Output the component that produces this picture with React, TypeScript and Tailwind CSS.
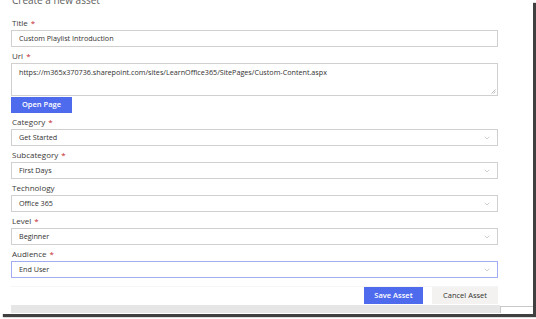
import { ChevronDown } from 'lucide-react';

const font = { fontFamily: '"Open Sans", "Noto Sans", sans-serif' };

function Label({ text, required }: { text: string; required?: boolean }) {
  return (
    <div className="h-[12px] pl-[1px] text-[8px] leading-[12px] text-[#3b3a39]">
      {text}
      {required && <span className="ml-[3px] text-[#c4262c]">*</span>}
    </div>
  );
}

function Dropdown({ label, value, required, focused }: { label: string; value: string; required?: boolean; focused?: boolean }) {
  return (
    <div className="flex flex-col">
      <Label text={label} required={required} />
      <div
        className={`mt-[1px] flex h-[17px] items-center justify-between border bg-white pl-[7px] pr-[6px] text-[7.2px] text-[#323130] ${
          focused ? 'border-[#a3acf3]' : 'border-[#d2d0ce]'
        }`}
      >
        <span>{value}</span>
        <ChevronDown className="h-[8px] w-[8px] text-[#a19f9d]" strokeWidth={1.5} />
      </div>
    </div>
  );
}

export default function App() {
  return (
    <div className="h-[319px] w-[536px] overflow-hidden bg-white" style={font}>
      <div className="h-[314px] w-[533px] overflow-hidden bg-white shadow-[3px_3px_1px_rgba(30,30,30,0.85)]">
        <div className="flex w-[487px] flex-col pl-[11px] box-content">
          <div className="h-[17px] overflow-visible">
            <div className="-mt-[6px] pl-[1px] text-[10px] leading-[12px] text-[#605e5c]">Create a new asset</div>
          </div>

          <div className="flex flex-col gap-[3px]">
            <div className="flex flex-col">
              <Label text="Title" required />
              <div className="mt-[1px] flex h-[17px] items-center border border-[#d2d0ce] pl-[7px] text-[7.2px] text-[#323130]">
                Custom Playlist Introduction
              </div>
            </div>

            <div className="flex flex-col">
              <Label text="Url" required />
              <div className="relative mt-[1px] h-[33px] border border-[#d2d0ce] pl-[7px] pt-[3px] text-[7.2px] leading-[10px] text-[#323130]">
                https://m365x370736.sharepoint.com/sites/LearnOffice365/SitePages/Custom-Content.aspx
                <svg className="absolute bottom-[1px] right-[1px]" width="5" height="5" viewBox="0 0 5 5">
                  <path d="M4.5 0.5 L0.5 4.5 M4.5 2.5 L2.5 4.5" stroke="#a19f9d" strokeWidth="0.7" />
                </svg>
              </div>
              <button className="mt-[1px] h-[16px] w-[61px] bg-[#4f6bed] text-[7.5px] font-semibold text-white">
                Open Page
              </button>
            </div>

            <Dropdown label="Category" value="Get Started" required />
            <Dropdown label="Subcategory" value="First Days" required />
            <Dropdown label="Technology" value="Office 365" />
            <Dropdown label="Level" value="Beginner" required />
            <Dropdown label="Audience" value="End User" required focused />
          </div>

          <div className="mt-[8px] h-[1px] bg-[#f6f6f6]" />
          <div className="flex justify-end gap-[9px]">
            <button className="h-[17px] w-[59px] bg-[#4f6bed] text-[7.5px] font-semibold text-white">Save Asset</button>
            <button className="h-[17px] w-[66px] bg-[#f3f2f1] text-[7.5px] text-[#323130]">Cancel Asset</button>
          </div>
        </div>
        <div className="mt-[1px] flex h-[8px]">
          <div className="ml-[11px] w-[489px] bg-[#e6e6e6]" />
          <div className="mt-[1px] flex-1 border-l border-t border-[#c8c8c8] bg-white" />
        </div>
      </div>
    </div>
  );
}
